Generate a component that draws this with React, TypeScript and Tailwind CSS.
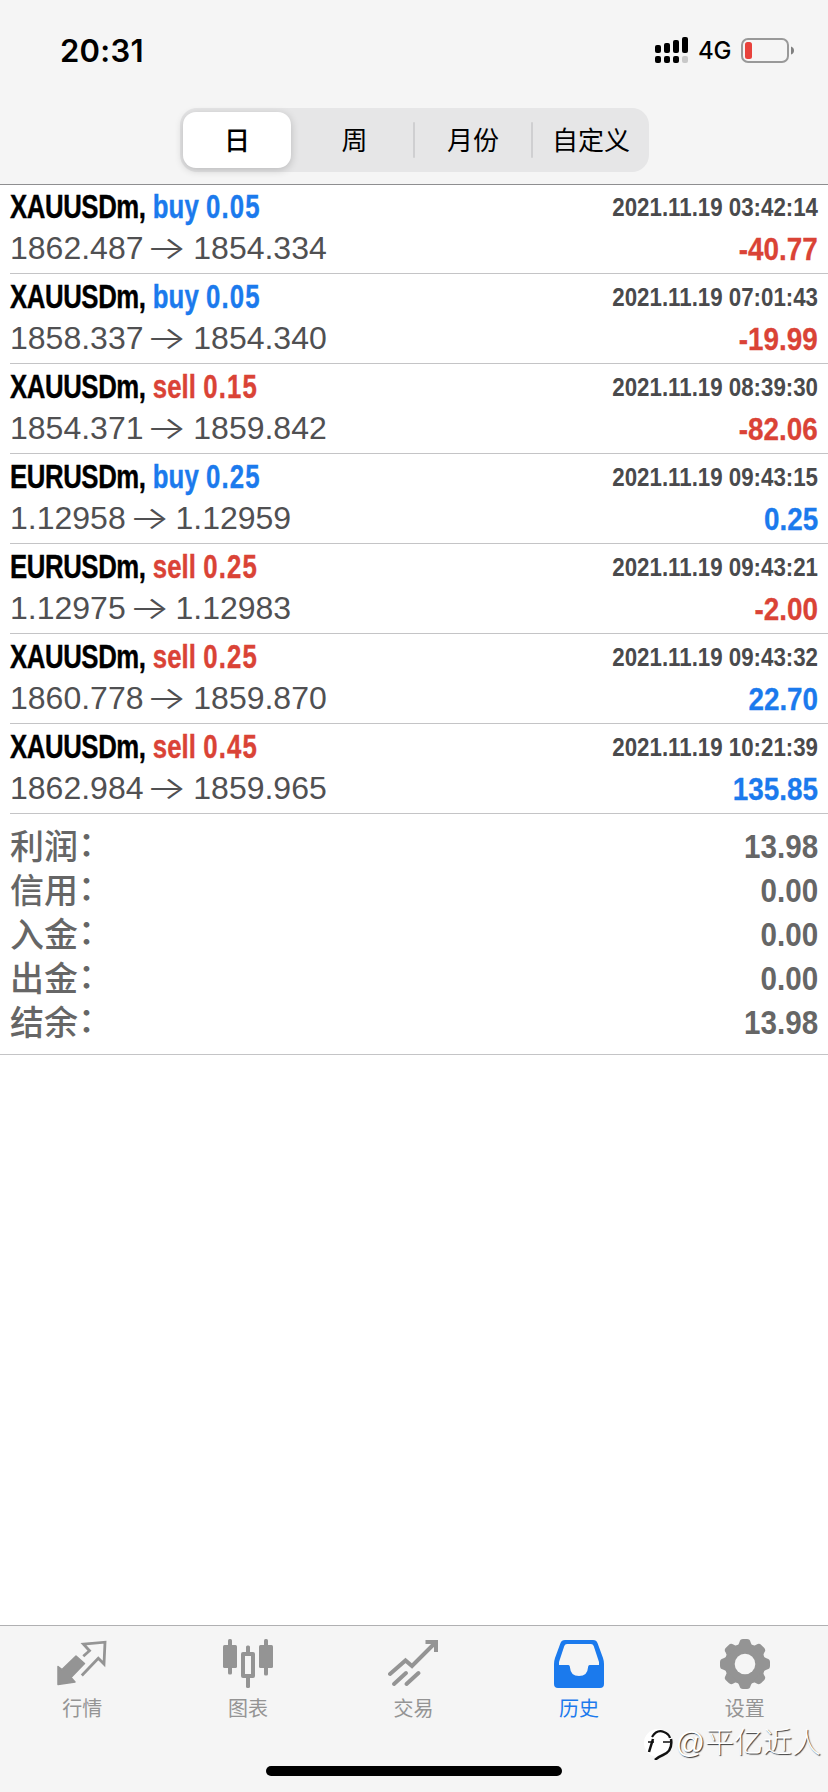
import React from 'react';
import clsx from 'clsx';

interface Deal {
  symbol: string;
  side: 'buy' | 'sell';
  volume: string;
  open: string;
  close: string;
  time: string;
  profit: string;
}

const deals: Deal[] = [
  { symbol: 'XAUUSDm', side: 'buy', volume: '0.05', open: '1862.487', close: '1854.334', time: '2021.11.19 03:42:14', profit: '-40.77' },
  { symbol: 'XAUUSDm', side: 'buy', volume: '0.05', open: '1858.337', close: '1854.340', time: '2021.11.19 07:01:43', profit: '-19.99' },
  { symbol: 'XAUUSDm', side: 'sell', volume: '0.15', open: '1854.371', close: '1859.842', time: '2021.11.19 08:39:30', profit: '-82.06' },
  { symbol: 'EURUSDm', side: 'buy', volume: '0.25', open: '1.12958', close: '1.12959', time: '2021.11.19 09:43:15', profit: '0.25' },
  { symbol: 'EURUSDm', side: 'sell', volume: '0.25', open: '1.12975', close: '1.12983', time: '2021.11.19 09:43:21', profit: '-2.00' },
  { symbol: 'XAUUSDm', side: 'sell', volume: '0.25', open: '1860.778', close: '1859.870', time: '2021.11.19 09:43:32', profit: '22.70' },
  { symbol: 'XAUUSDm', side: 'sell', volume: '0.45', open: '1862.984', close: '1859.965', time: '2021.11.19 10:21:39', profit: '135.85' },
];

const summary = [
  { label: '利润', value: '13.98' },
  { label: '信用', value: '0.00' },
  { label: '入金', value: '0.00' },
  { label: '出金', value: '0.00' },
  { label: '结余', value: '13.98' },
];

const periods = [
  { label: '日', width: 'w-[108px] ml-[3px] mr-[3px]', active: true },
  { label: '周', width: 'w-[117px]' },
  { label: '月份', width: 'w-[116px]', divider: true },
  { label: '自定义', width: 'w-[116px]', divider: true },
];

const QuotesIcon = () => (
  <svg width="50" height="50" viewBox="0 0 50 50" fill="none">
    <path
      d="M1 27.500 5 30.500 19 17 27.500 24.500 14 38.500 18 43 1 45.500Z"
      fill="currentColor"
      stroke="currentColor"
      strokeWidth="1.500"
      strokeLinejoin="round"
    />
    <path d="M26.300 17.200 32.500 11.700 26.500 5.200 48 3.200 47 25 41.300 19.300 24.800 36.500" stroke="currentColor" strokeWidth="2.800" />
  </svg>
);

const ChartIcon = () => (
  <svg width="50" height="50" viewBox="0 0 50 50" fill="currentColor">
    <rect x="5" y="0" width="4" height="35.500" rx="1.500" />
    <rect x="0" y="6" width="14" height="23" rx="1.500" />
    <rect x="41" y="0" width="4" height="36.500" rx="1.500" />
    <rect x="36" y="6" width="14" height="23" rx="1.500" />
    <rect x="23" y="6.500" width="4" height="8" rx="1.500" />
    <rect x="23" y="37" width="4" height="12" rx="1.500" />
    <rect x="20" y="15" width="10" height="22" fill="none" stroke="currentColor" strokeWidth="4" strokeLinejoin="round" />
  </svg>
);

const TradeIcon = () => (
  <svg width="50" height="50" viewBox="0 0 50 50" fill="none" stroke="currentColor" strokeWidth="4" strokeLinecap="round">
    <path d="M2 35 17.500 21.500 24 27 47 4" />
    <path d="M39.500 3H48V11" strokeLinecap="square" />
    <path d="M6 45 18 34M18.500 45 30.500 34" />
  </svg>
);

const HistoryIcon = () => (
  <svg width="50" height="50" viewBox="0 0 50 50" fill="currentColor">
    <path
      fillRule="evenodd"
      d="M11 1H39Q42.500 1 43.500 4L49 19Q50 22 50 25V45Q50 49 46 49H4Q0 49 0 45V25Q0 22 1 19L6.500 4Q7.500 1 11 1ZM13 5Q11 5 10.300 7L5 23V26H14.500Q16 26 16 28.500Q16.500 37 25 37Q33.500 37 34 28.500Q34 26 35.500 26H45V23L39.700 7Q39 5 37 5Z"
    />
  </svg>
);

const SettingsIcon = () => (
  <svg width="50" height="50" viewBox="0 0 50 50">
    <g fill="currentColor">
      <circle cx="25" cy="25" r="20.500" />
      {[0, 45, 90, 135, 180, 225, 270, 315].map((angle) => (
        <path key={angle} transform={`rotate(${angle} 25 25)`} d="M16 8Q19 6 19.500 3Q20 0 23 0H27Q30 0 30.500 3Q31 6 34 8Z" />
      ))}
    </g>
    <circle cx="25" cy="25" r="10.300" fill="#f5f5f5" />
  </svg>
);

const tabs = [
  { label: '行情', icon: QuotesIcon },
  { label: '图表', icon: ChartIcon },
  { label: '交易', icon: TradeIcon },
  { label: '历史', icon: HistoryIcon, active: true },
  { label: '设置', icon: SettingsIcon },
];

function StatusBar() {
  return (
    <div className="flex h-[100px] items-center justify-between pl-[60px] pr-[33px]">
      <span className="font-['Inter'] text-[31px] font-semibold leading-none tracking-[0.3px]">20:31</span>
      <div className="flex items-center">
        <svg width="34" height="26" viewBox="0 0 34 26">
          <rect x="0" y="8" width="6" height="8" rx="2" />
          <rect x="9" y="6" width="6" height="10" rx="2" />
          <rect x="18" y="3" width="6" height="13" rx="2" />
          <rect x="27" y="0" width="6" height="16" rx="2" />
          <rect x="0" y="19" width="6" height="7" rx="2" />
          <rect x="9" y="19" width="6" height="7" rx="2" />
          <rect x="18" y="19" width="6" height="7" rx="2" />
          <rect x="27" y="19" width="6" height="7" rx="2" fill="#c8c8c8" />
        </svg>
        <span className="ml-[9px] mt-[2px] w-[43px] font-['Inter'] text-[24px] font-medium leading-none tracking-[-0.3px]">4G</span>
        <svg width="54" height="25" viewBox="0 0 54 25" fill="none">
          <rect x="1" y="1" width="46" height="23" rx="6" stroke="#999" strokeWidth="2" />
          <rect x="4" y="4" width="7" height="17" rx="2.500" fill="#e8423c" />
          <path d="M50 8.500Q53 9.500 53 12.500T50 16.500Z" fill="#808080" />
        </svg>
      </div>
    </div>
  );
}

function PeriodSwitch() {
  return (
    <div className="ml-[180px] mt-2 flex h-16 w-[469px] items-center rounded-[17px] bg-[#e6e6e7]">
      {periods.map((period, i) => (
        <React.Fragment key={period.label}>
          {i > 0 && <div className={clsx('h-9 w-[2px] rounded-full', period.divider && 'bg-[#cfcfd1]')} />}
          <button
            className={clsx(
              'flex h-14 items-center justify-center rounded-[13px] pt-px text-[26px] leading-none',
              period.width,
              period.active && 'bg-white font-medium shadow-[0_2px_8px_rgba(0,0,0,0.2)]',
            )}
          >
            {period.label}
          </button>
        </React.Fragment>
      ))}
    </div>
  );
}

function DealRow({ deal }: { deal: Deal }) {
  return (
    <div className="ml-[10px] h-[90px] border-b border-[#c4c4c6] pr-[10px] pt-px">
      <div className="flex h-[44px] items-center justify-between whitespace-nowrap font-bold">
        {/* Condensed face: the regular bold squeezed horizontally */}
        <span className="origin-left -translate-y-px scale-x-[0.78] text-[33px] leading-none [-webkit-text-stroke:0.4px_currentColor]">
          <span className="tracking-[-0.5px]">{deal.symbol},</span>{' '}
          <span className={deal.side === 'buy' ? 'text-[#1b7aed]' : 'text-[#da4336]'}>
            <span className="tracking-[0.1px]">{deal.side}</span> <span className="tracking-[1.5px]">{deal.volume}</span>
          </span>
        </span>
        <span className="origin-right scale-x-[0.857] text-[26px] leading-none text-[#4a4a4c]">{deal.time}</span>
      </div>
      <div className="flex h-[38px] items-center justify-between">
        <span className="text-[32px] leading-none text-[#505052]">
          {deal.open} <span className="mr-[1.5px] inline-block -translate-x-px scale-x-[1.35] font-['Inter'] font-light">→</span> {deal.close}
        </span>
        <span
          className={clsx(
            'origin-right translate-y-px scale-x-[0.87] text-[32px] font-bold leading-none [-webkit-text-stroke:0.3px_currentColor]',
            deal.profit.startsWith('-') ? 'text-[#da4336]' : 'text-[#1b7aed]',
          )}
        >
          {deal.profit}
        </span>
      </div>
    </div>
  );
}

export default function App() {
  return (
    <div className="flex h-[1792px] w-[828px] flex-col bg-white font-['Liberation_Sans','Noto_Sans_CJK_SC',sans-serif] text-black">
      <header className="h-[185px] border-b border-[#8e8e90] bg-[#f5f5f5]">
        <StatusBar />
        <PeriodSwitch />
      </header>

      <main className="flex-1">
        <div className="-mt-px">
          {deals.map((deal) => (
            <DealRow key={deal.time} deal={deal} />
          ))}
        </div>

        {/* Totals */}
        <div className="border-b border-[#c4c4c6] px-[10px] py-[10px] text-[#666]">
          {summary.map((row) => (
            <div key={row.label} className="flex h-[44px] items-center justify-between leading-none">
              <span className="translate-y-px text-[34px] font-medium">
                {row.label}
                <span className="inline-block -translate-y-[3px]">：</span>
              </span>
              <span className="origin-right scale-x-[0.87] text-[34px] font-bold">{row.value}</span>
            </div>
          ))}
        </div>
      </main>

      <footer className="relative flex h-[167px] flex-col border-t border-[#b0b0b2] bg-[#f5f5f5]">
        <nav className="flex pt-[13px]">
          {tabs.map((tab) => (
            <div key={tab.label} className={clsx('flex flex-1 flex-col items-center pr-px', tab.active ? 'text-[#1b7aed]' : 'text-[#949494]')}>
              <tab.icon />
              <span className="mt-[10px] text-[20px] leading-[20px]">{tab.label}</span>
            </div>
          ))}
        </nav>
        <div className="mx-auto mb-4 mt-auto h-[10px] w-[296px] rounded-full bg-black" />

        {/* Watermark */}
        <div className="absolute right-[7px] top-[100px] flex items-center text-white">
          <svg width="32" height="34" viewBox="0 0 32 34" fill="none">
            <circle cx="14" cy="17" r="14" fill="#fff" />
            <g stroke="#111">
              <path d="M4 16H10M19 16H26" strokeWidth="1.500" />
              <path d="M9 13 5 26" strokeWidth="2.500" />
              <path d="M8 11Q13 3 20 6 25 8 26 12" strokeWidth="2.200" />
              <path d="M27 13Q29 25 19 29 14 31 11 34" strokeWidth="2.500" />
            </g>
          </svg>
          <span className="text-[29px] font-light leading-[34px] [text-shadow:1px_1px_1px_#333]">@平亿近人</span>
        </div>
      </footer>
    </div>
  );
}
